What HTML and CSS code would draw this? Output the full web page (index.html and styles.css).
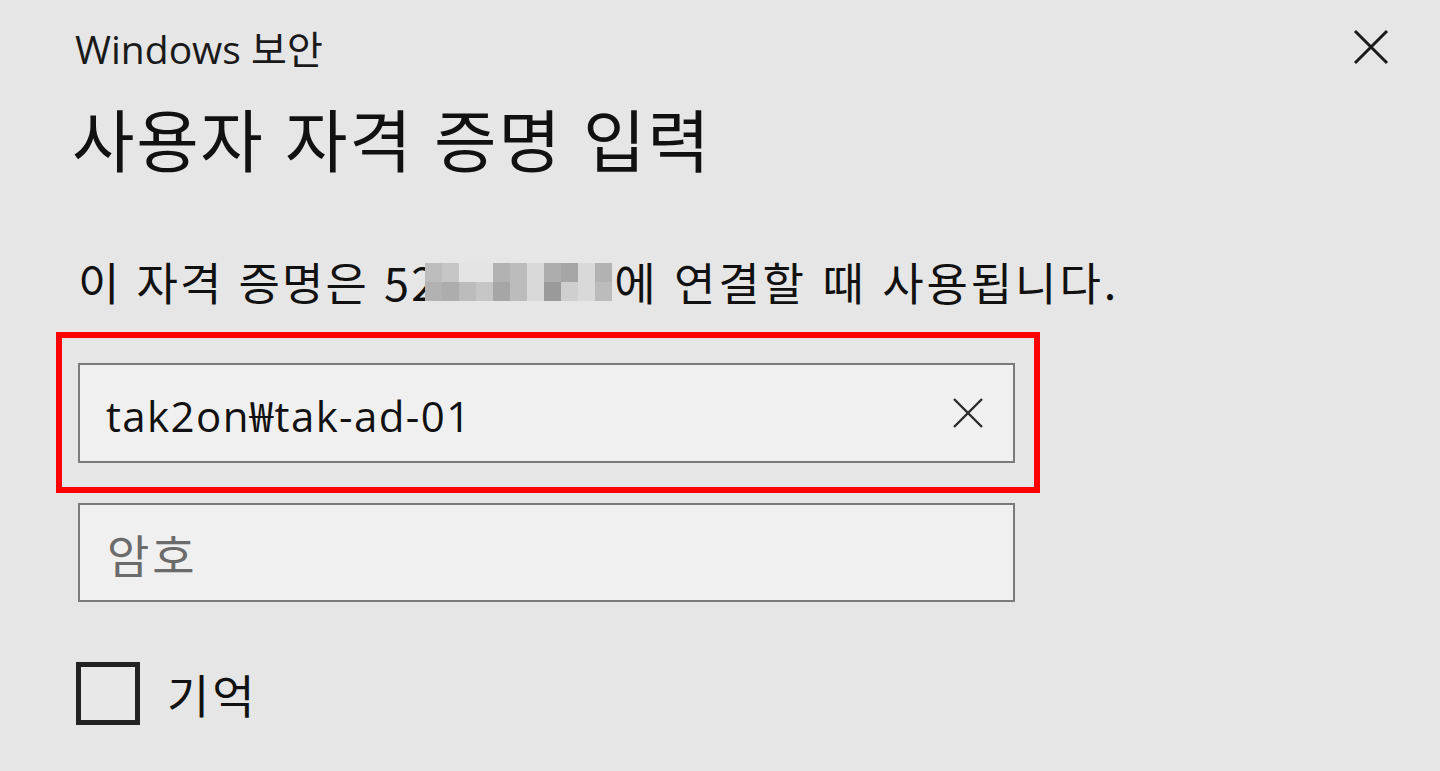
FILE: index.html
```html
<!DOCTYPE html>
<html lang="ko">
<head>
<meta charset="utf-8">
<title>Windows 보안</title>
<link rel="stylesheet" href="styles.css">
</head>
<body>
<div class="dialog">
  <header class="header">
    <div class="app-title">Windows 보안</div>
    <button class="close" aria-label="닫기">
      <svg width="36" height="36" viewBox="0 0 36 36"><path d="M2 2 L34 34 M34 2 L2 34" stroke="#1a1a1a" stroke-width="3" fill="none"/></svg>
    </button>
  </header>
  <h1 class="heading">사용자 자격 증명 입력</h1>
  <p class="desc">이 자격 증명은 5<span class="clip">2</span><span class="mosaic"><i class="c1"></i><i class="c2"></i><i class="c0"></i><i class="c0"></i><i class="c3"></i><i class="c4"></i><i class="c5"></i><i class="c6"></i><i class="c7"></i><i class="c5"></i><i class="c3"></i><i class="c3"></i><i class="c6"></i><i class="c4"></i><i class="c2"></i><i class="c7"></i><i class="c4"></i><i class="c5"></i><i class="c8"></i><i class="c9"></i><i class="c5"></i><i class="c4"></i></span><span class="tail">에 연결할 때 사용됩니다.</span></p>
  <div class="highlight">
    <div class="field">
      <span class="value">tak2on₩tak-ad-01</span>
      <svg class="clear" width="30" height="30" viewBox="0 0 30 30"><path d="M1 1 L29 29 M29 1 L1 29" stroke="#2b2b2b" stroke-width="2.4" fill="none"/></svg>
    </div>
  </div>
  <div class="field field-pw">
    <span class="placeholder">암호</span>
  </div>
  <label class="remember">
    <span class="box"></span>
    <span class="remember-text">기억</span>
  </label>
</div>
</body>
</html>
```

FILE: styles.css
```css
* { box-sizing: border-box; }
html, body {
  margin: 0;
  padding: 0;
  background: #e6e6e6;
  height: 100%;
  overflow: hidden;
}
body {
  font-family: "Open Sans", "Noto Sans CJK KR", sans-serif;
  color: #000;
}
.dialog {
  padding: 0 50px 0 78px;
}
.header {
  height: 94px;
  display: flex;
  align-items: center;
  justify-content: space-between;
}
.app-title {
  margin-left: -3px;
  font-size: 39px;
  color: #1a1a1a;
}
.close {
  background: none;
  border: 0;
  padding: 0;
  margin-right: 1px;
  display: flex;
}
.heading {
  margin: 0 0 0 -6px;
  height: 88px;
  line-height: 88px;
  font-weight: 400;
  font-size: 68px;
  letter-spacing: 1.6px;
  font-family: "Noto Sans CJK KR", sans-serif;
  color: #111;
}
.desc {
  margin: 75px 0 25px 0;
  height: 50px;
  line-height: 50px;
  font-size: 45px;
  letter-spacing: 2.2px;
  font-family: "Noto Sans CJK KR", sans-serif;
  color: #111;
  display: flex;
  align-items: center;
  white-space: nowrap;
}
.tail {
  letter-spacing: 2.9px;
}
.clip {
  display: inline-block;
  width: 14px;
  overflow: hidden;
}
.mosaic {
  display: inline-grid;
  grid-template-columns: repeat(11, 17px);
  grid-template-rows: 19px 19px;
  margin-right: 2px;
}
.mosaic i { display: block; }
.c0 { background: #e4e4e4; }
.c1 { background: #bdbdbd; }
.c2 { background: #c6c6c6; }
.c3 { background: #b2b2b2; }
.c4 { background: #bcbcbc; }
.c5 { background: #d9d9d9; }
.c6 { background: #adadad; }
.c7 { background: #a6a6a6; }
.c8 { background: #9a9a9a; }
.c9 { background: #cfcfcf; }
.highlight {
  margin-left: -22px;
  width: 984px;
  border: 6px solid #ff0000;
  padding: 25px 19px 24px 16px;
}
.field {
  width: 937px;
  height: 100px;
  border: 2px solid #7a7a7a;
  background: #f0f0f0;
  display: flex;
  align-items: center;
  justify-content: space-between;
  padding: 0 30px 0 26px;
}
.value {
  font-size: 42px;
  letter-spacing: 1.4px;
  color: #111;
}
.clear { display: block; }
.field-pw {
  margin-top: 10px;
  height: 99px;
  padding-left: 27px;
}
.placeholder {
  font-size: 46px;
  letter-spacing: 3px;
  font-family: "Noto Sans CJK KR", sans-serif;
  color: #6b6b6b;
}
.remember {
  margin-top: 58px;
  display: flex;
  align-items: center;
  gap: 27px;
  margin-left: -2px;
}
.box {
  width: 64px;
  height: 63px;
  border: 5px solid #222;
  background: #e8e8e8;
}
.remember-text {
  font-size: 46px;
  letter-spacing: 3px;
  font-family: "Noto Sans CJK KR", sans-serif;
  color: #111;
}
```
